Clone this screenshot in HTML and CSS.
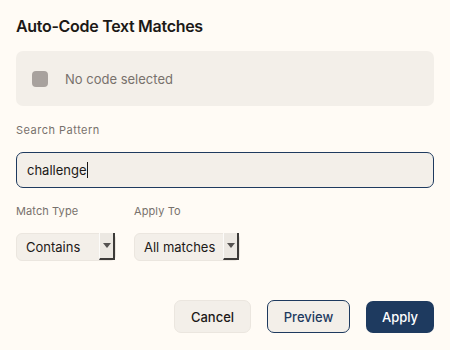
FILE: index.html
```html
<!DOCTYPE html>
<html lang="en">
<head>
    <meta charset="UTF-8">
    <title>Auto-Code Text Matches</title>
    <link rel="stylesheet" href="styles.css">
</head>
<body>
    <div class="dialog">
        <div class="dialog-title">Auto-Code Text Matches</div>

        <div class="code-box">
            <span class="code-swatch"></span>
            <span class="code-name">No code selected</span>
        </div>

        <label class="field-label">Search Pattern</label>
        <div class="search-input">challenge<span class="caret"></span></div>

        <div class="options">
            <div class="option">
                <label class="field-label option-label">Match Type</label>
                <div class="select select-type">
                    <span class="select-value">Contains</span>
                    <span class="select-arrow"><span class="tri"></span></span>
                </div>
            </div>
            <div class="option">
                <label class="field-label option-label">Apply To</label>
                <div class="select select-scope">
                    <span class="select-value">All matches</span>
                    <span class="select-arrow"><span class="tri"></span></span>
                </div>
            </div>
        </div>

        <div class="actions">
            <button class="btn btn-cancel">Cancel</button>
            <button class="btn btn-preview">Preview</button>
            <button class="btn btn-apply">Apply</button>
        </div>
    </div>
</body>
</html>
```

FILE: styles.css
```css
body {
    margin: 0;
    background: #fffbf5;
    font-family: Inter, 'Noto Sans', sans-serif;
    color: #1c1917;
}
.dialog {
    width: 418px;
    padding: 16px 16px 0 16px;
}
.dialog-title {
    font-size: 16px;
    font-weight: 600;
    line-height: 20px;
    letter-spacing: -0.3px;
    margin-bottom: 15px;
}
.code-box {
    background: #f3efe9;
    border-radius: 7px;
    height: 55px;
    display: flex;
    align-items: center;
    padding-left: 16px;
    margin-bottom: 17px;
}
.code-swatch {
    width: 16px;
    height: 16px;
    border-radius: 4px;
    background: #a8a29e;
    margin-right: 17px;
}
.code-name {
    font-size: 13px;
    color: #78716c;
}
.field-label {
    display: block;
    font-size: 11px;
    font-weight: 400;
    color: #78716c;
    letter-spacing: 0.5px;
    line-height: 14px;
    margin-bottom: 15px;
}
.option-label {
    letter-spacing: 0.1px;
}
.search-input {
    height: 34px;
    border: 1px solid #1e3a5f;
    border-radius: 7px;
    background: #f3efe9;
    font-size: 13px;
    line-height: 34px;
    padding-left: 10px;
    margin-bottom: 16px;
}
.caret {
    display: inline-block;
    width: 1px;
    height: 16px;
    background: #1c1917;
    vertical-align: -3px;
}
.options {
    display: flex;
    gap: 18px;
}
.select {
    box-sizing: border-box;
    height: 28px;
    border: 1px solid #ebe6df;
    border-radius: 6px;
    background: #f3efe9;
    display: flex;
    align-items: center;
    font-size: 13px;
}
.select-type { width: 100px; }
.select-scope { width: 106px; }
.select-value {
    flex: 1;
    padding-left: 9px;
}
.select-arrow {
    width: 16px;
    height: 27px;
    margin-top: -2px;
    background: #ece8e2;
    border-left: 1px solid #fcfbf9;
    border-right: 2px solid #3c3a38;
    border-bottom: 2px solid #3c3a38;
    display: flex;
    align-items: center;
    justify-content: center;
    box-sizing: border-box;
}
.tri {
    width: 0;
    height: 0;
    border-left: 4px solid transparent;
    border-right: 4px solid transparent;
    border-top: 5px solid #555250;
}
.actions {
    display: flex;
    justify-content: flex-end;
    gap: 16px;
    margin-top: 39px;
}
.btn {
    font-family: inherit;
    font-size: 13px;
    font-weight: 500;
    height: 33px;
    border-radius: 7px;
    cursor: pointer;
}
.btn-cancel {
    width: 77px;
    background: #f3efe9;
    border: 1px solid #ebe6df;
    color: #1c1917;
}
.btn-preview {
    width: 83px;
    background: #f3efe9;
    border: 1px solid #1e3a5f;
    color: #1e3a5f;
}
.btn-apply {
    width: 68px;
    height: 32px;
    margin-top: 1px;
    background: #1e3a5f;
    border: none;
    color: #fff;
}
```
